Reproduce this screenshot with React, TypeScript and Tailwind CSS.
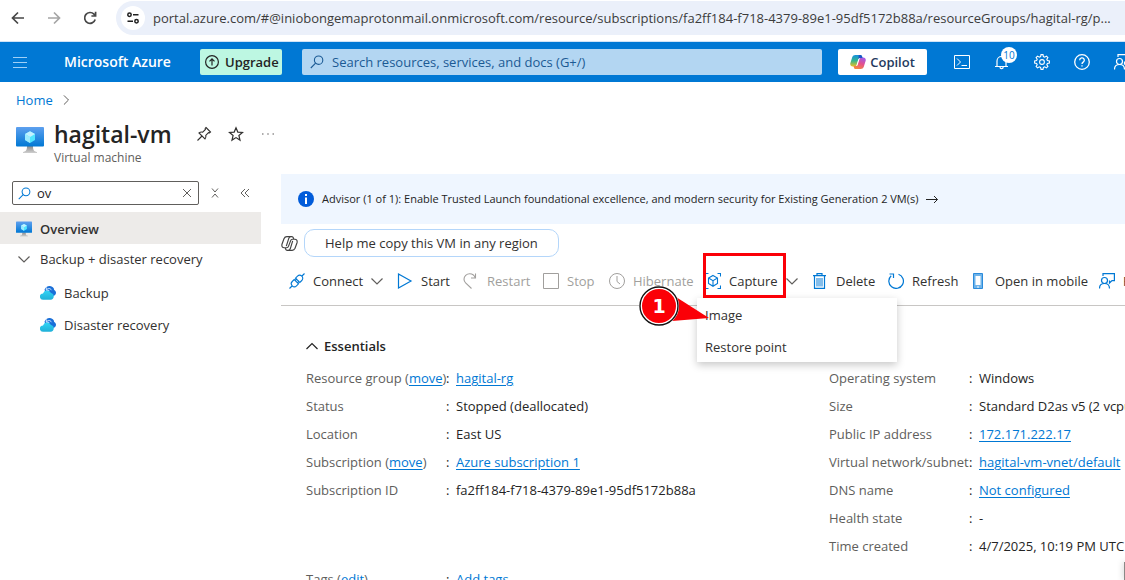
import type { ReactNode } from "react";

const ADDRESS =
  "portal.azure.com/#@iniobongemaprotonmail.onmicrosoft.com/resource/subscriptions/fa2ff184-f718-4379-89e1-95df5172b88a/resourceGroups/hagital-rg/p...";

type SvgProps = { size?: number; className?: string; children: ReactNode; box?: string; sw?: number };

function Line({ size = 16, className = "", children, box = "0 0 16 16", sw = 1 }: SvgProps) {
  return (
    <svg
      width={size}
      height={size}
      viewBox={box}
      fill="none"
      stroke="currentColor"
      strokeWidth={sw}
      className={"shrink-0 " + className}
      aria-hidden="true"
    >
      {children}
    </svg>
  );
}

function Chevron({ dir, className = "", size = 12 }: { dir: "up" | "down" | "right"; className?: string; size?: number }) {
  const d = { up: "M0.5 9 6 3.5 11.5 9", down: "M0.5 3.5 6 9 11.5 3.5", right: "M3.5 0.5 9 6 3.5 11.5" }[dir];
  return (
    <Line size={size} box="0 0 12 12" className={className} sw={1.2}>
      <path d={d} />
    </Line>
  );
}

function SearchIcon({ className = "", size = 14 }: { className?: string; size?: number }) {
  return (
    <Line size={size} box="0 0 14 14" className={className} sw={1.1}>
      <circle cx="8.6" cy="5.2" r="4.2" />
      <path d="M5.6 8.2 0.8 13" />
    </Line>
  );
}

function VmIcon({ size, id }: { size: number; id: string }) {
  return (
    <svg width={size} height={size} viewBox="0 0 28 28" className="shrink-0" aria-hidden="true">
      <defs>
        <linearGradient id={id + "a"} x1="0" y1="0" x2="0" y2="1">
          <stop offset="0" stopColor="#5ea0ef" />
          <stop offset="1" stopColor="#0078d4" />
        </linearGradient>
        <linearGradient id={id + "b"} x1="0" y1="0" x2="0" y2="1">
          <stop offset="0" stopColor="#8a8a8a" />
          <stop offset="1" stopColor="#cfcfcf" />
        </linearGradient>
      </defs>
      <path d="M11 20h6c0 4 .8 5.400 4 6v1H7v-1c3.200-.6 4-2 4-6z" fill={"url(#" + id + "b)"} />
      <rect x="0" y="1" width="28" height="19.500" rx="1" fill={"url(#" + id + "a)"} />
      <path d="M14 5.200 19 8v6l-5 2.900L9 14V8z" fill="#50e6ff" />
      <path d="M14 5.200 19 8l-5 3-5-3z" fill="#c3f1ff" />
      <path d="M14 11v5.900L9 14V8z" fill="#9cebff" />
    </svg>
  );
}

function CloudIcon({ id }: { id: string }) {
  return (
    <svg width="16" height="16" viewBox="0 0 16 16" className="shrink-0" aria-hidden="true">
      <defs>
        <linearGradient id={id} x1="0" y1="0" x2="0" y2="1">
          <stop offset="0" stopColor="#32d4f5" />
          <stop offset="1" stopColor="#1fb0d8" />
        </linearGradient>
      </defs>
      <path d="M4.500 4.800C5.300 2.400 7.600.9 10 1.100c2.300.2 3.900 1.700 4.200 3.800C15.400 5.400 16 6.500 16 7.700c0 1.900-1.400 3.200-3.300 3.200H7z" fill="#1a6fd8" />
      <path d="M6.300 2.300v3h3M6.500 5C7.600 3 10.200 2.800 11.500 5.200" stroke="#cfe5ff" strokeWidth="1" fill="none" />
      <path
        d="M3.200 14.800A3.200 3.200 0 0 1 3 8.400 4.300 4.300 0 0 1 11 7.900a3.500 3.500 0 0 1-.4 6.900z"
        fill={"url(#" + id + ")"}
      />
    </svg>
  );
}

function CopilotColor() {
  return (
    <svg width="16" height="16" viewBox="0 0 16 16" className="shrink-0" aria-hidden="true">
      <defs>
        <linearGradient id="cpA" x1="0" y1="0" x2="0" y2="1">
          <stop offset="0" stopColor="#1490df" />
          <stop offset="0.500" stopColor="#35b58c" />
          <stop offset="1" stopColor="#f0c020" />
        </linearGradient>
        <linearGradient id="cpB" x1="0.700" y1="0" x2="0.300" y2="1">
          <stop offset="0" stopColor="#a05be8" />
          <stop offset="0.500" stopColor="#e5508c" />
          <stop offset="1" stopColor="#f58a3c" />
        </linearGradient>
      </defs>
      <path d="M5.300 1h5c1 0 1.500.7 1.800 1.600L12.500 4H10c-1 0-1.500.7-1.800 1.600L6.500 11c-.3 1-.9 1.600-2 1.600H2.700C.8 12.600-.2 11 .4 9l1.900-6C2.800 1.700 3.800 1 5.300 1z" fill="url(#cpA)" />
      <path d="M10.700 15h-5c-1 0-1.500-.7-1.800-1.600L3.500 12H6c1 0 1.500-.7 1.800-1.600L9.500 5c.3-1 .9-1.600 2-1.600h1.800c1.900 0 2.900 1.600 2.300 3.600l-1.900 6c-.5 1.300-1.500 2-3 2z" fill="url(#cpB)" />
      <path d="M8.700 1h1.600c1 0 1.500.7 1.800 1.600l.4 1.400H10c-.8 0-1.300.4-1.600 1z" fill="#1b55c8" />
      <path d="M8.600 5.200 6.900 10.800H7.300L9.200 5z" fill="#fff" />
    </svg>
  );
}

function FeedbackIcon({ className = "", size = 16 }: { className?: string; size?: number }) {
  return (
    <Line className={className} size={size} sw={1.2}>
      <circle cx="5.500" cy="7.500" r="3" />
      <path d="M.5 15.500c0-3 2-5 5-5s5 2 5 5M4 3V.6h11.400v7H13L10.500 10V7.500" />
    </Line>
  );
}

function ToolButton({
  icon,
  label,
  disabled = false,
  menu = false,
}: {
  icon: ReactNode;
  label: string;
  disabled?: boolean;
  menu?: boolean;
}) {
  return (
    <button
      type="button"
      disabled={disabled}
      className="flex h-8 items-center gap-2 whitespace-nowrap text-[#323130] disabled:text-[#a19f9d]"
    >
      <span className={disabled ? "text-[#a19f9d]" : "text-[#0078d4]"}>{icon}</span>
      {label}
      {menu && <Chevron dir="down" className="text-[#605e5c]" />}
    </button>
  );
}

function Link({ children }: { children: ReactNode }) {
  return (
    <a href="#" className="text-[#0078d4] underline underline-offset-2">
      {children}
    </a>
  );
}

function Fact({ label, action, children }: { label: string; action?: string; children: ReactNode }) {
  return (
    <div className="flex h-7 items-center whitespace-nowrap">
      <dt className="w-[140px] shrink-0 text-[#605e5c]">
        {label}
        {action && (
          <>
            {" "}
            (<Link>{action}</Link>)
          </>
        )}
      </dt>
      <span className="w-[10px] shrink-0">:</span>
      <dd>{children}</dd>
    </div>
  );
}

function BrowserBar() {
  return (
    <div className="flex h-[41px] items-start bg-white pt-px text-[#474747]">
      <div className="flex h-[34px] w-[116px] shrink-0 items-center gap-5 pl-[10px]">
        <button type="button" aria-label="Back">
          <Line sw={1.7}>
            <path d="M14 8H3M8 2.500 2.500 8 8 13.500" />
          </Line>
        </button>
        <button type="button" aria-label="Forward" className="text-[#a5a5a5]">
          <Line sw={1.7}>
            <path d="M2 8h11M8 2.500 13.500 8 8 13.500" />
          </Line>
        </button>
        <button type="button" aria-label="Reload">
          <Line sw={1.7}>
            <path d="M13.200 9.500A5.400 5.400 0 1 1 12 4.200L13.500 5.700M13.600 1.800v4.200H9.400" />
          </Line>
        </button>
      </div>
      <div className="flex h-[34px] min-w-0 flex-1 items-center gap-2 rounded-l-full bg-[#ebf0fa] pl-[5px]">
        <button
          type="button"
          aria-label="Site information"
          className="flex size-6 shrink-0 items-center justify-center rounded-full bg-white text-[#1f1f1f]"
        >
          <Line size={14} box="0 0 14 14" sw={1.5}>
            <circle cx="3.500" cy="3.800" r="1.700" />
            <path d="M7 3.800h5.500M1.500 10.200H7" />
            <circle cx="10.500" cy="10.200" r="1.700" />
          </Line>
        </button>
        <input
          aria-label="Address"
          defaultValue={ADDRESS}
          className="min-w-0 flex-1 bg-transparent text-[13px] text-[#3c3c3c] outline-none"
        />
      </div>
    </div>
  );
}

function PortalHeader() {
  return (
    <header className="flex h-[41px] items-center overflow-hidden border-t border-[#cfe3f7] bg-[#0078d4] text-white">
      <button type="button" aria-label="Portal menu" className="ml-[13px] w-[51px] shrink-0 text-[#9fd0f7]">
        <Line size={14} box="0 0 14 14" sw={1.2}>
          <path d="M0 2.500h14M0 7.500h14M0 12.500h14" />
        </Line>
      </button>
      <a href="#" className="w-[136px] shrink-0 text-[14px] font-semibold whitespace-nowrap">
        Microsoft Azure
      </a>
      <button
        type="button"
        className="flex h-[26px] w-[82px] shrink-0 items-center gap-[6px] rounded-[2px] bg-[#bdf7e2] pl-[5px] text-[13px] font-semibold text-[#242424]"
      >
        <Line size={14} box="0 0 14 14" sw={1.2}>
          <circle cx="7" cy="7" r="6.400" />
          <path d="M7 10.500V4M4.500 6.300 7 3.800l2.500 2.500" />
        </Line>
        Upgrade
      </button>
      <label className="ml-5 flex h-[26px] min-w-0 flex-1 items-center gap-2 rounded-[2px] bg-[#b3d6f2] pl-2 text-[#1b5a94]">
        <SearchIcon />
        <input
          aria-label="Search resources, services, and docs"
          placeholder="Search resources, services, and docs (G+/)"
          className="min-w-0 flex-1 bg-transparent text-[13px] outline-none placeholder:text-[#1b5a94]"
        />
      </label>
      <button
        type="button"
        className="ml-4 flex h-[26px] w-[89px] shrink-0 items-center justify-center gap-1 rounded-[2px] bg-white text-[13px] font-semibold text-[#243a5e]"
      >
        <CopilotColor />
        Copilot
      </button>
      <div className="ml-[27px] flex w-[171px] shrink-0 items-center gap-6">
        <button type="button" aria-label="Cloud Shell">
          <Line>
            <path d="M.5 1.500h15v13H.5zM3 4.500 6.500 8 3 11.500M7.500 11.500H13" />
          </Line>
        </button>
        <button type="button" aria-label="Notifications" className="relative">
          <Line sw={1.2}>
            <path d="M3 12.500V7a4.500 4.500 0 0 1 9 0v5.500M1 12.500h13M6 13a1.600 1.600 0 0 0 3.200 0" />
          </Line>
          <span className="absolute -top-[7px] left-[7px] flex size-4 items-center justify-center rounded-full bg-white text-[10px] leading-none text-[#0078d4]">
            10
          </span>
        </button>
        <button type="button" aria-label="Settings">
          <Line sw={1.1}>
            <circle cx="8" cy="8" r="2.400" />
            <path d="M6.600 2.600 7 .6h2l.4 2 1.300.6 1.800-1.100 1.400 1.400-1.100 1.800.6 1.300 2 .4v2l-2 .4-.6 1.300 1.100 1.800-1.400 1.400-1.800-1.100-1.300.6-.4 2H7l-.4-2-1.300-.6-1.800 1.100-1.400-1.400 1.100-1.800-.6-1.300-2-.4V7l2-.4.6-1.300-1.100-1.800 1.400-1.400 1.800 1.100z" />
          </Line>
        </button>
        <button type="button" aria-label="Help">
          <Line sw={1.3}>
            <circle cx="8" cy="8" r="7.300" />
            <path d="M5.700 6.200a2.300 2.300 0 1 1 3.500 1.900C8.300 8.700 8 9 8 10M8 11.200v1.400" />
          </Line>
        </button>
        <button type="button" aria-label="Feedback">
          <FeedbackIcon />
        </button>
      </div>
    </header>
  );
}

function ResourceTitle() {
  return (
    <div>
      <nav aria-label="Breadcrumb" className="flex h-9 items-center gap-2 pl-4 text-[13px]">
        <a href="#" className="text-[#0078d4]">
          Home
        </a>
        <Chevron dir="right" size={10} className="text-[#605e5c]" />
      </nav>
      <div className="flex items-start pl-4">
        <div className="w-[38px] pt-2">
          <VmIcon size={28} id="vmL" />
        </div>
        <div className="w-[142px]">
          <h1 className="text-[23px] leading-8 font-semibold whitespace-nowrap text-[#242424]">hagital-vm</h1>
          <p className="text-[12px] leading-4 text-[#605e5c]">Virtual machine</p>
        </div>
        <div className="flex h-8 items-center gap-4 text-[#323130]">
          <button type="button" aria-label="Pin to dashboard">
            <Line sw={1.1}>
              <path d="M10 1.500 14.500 6l-1 .8-1-.2-2.700 2.700c.4 1.400.1 2.600-.8 3.700L3 7c1.100-.9 2.300-1.200 3.700-.8l2.700-2.700-.2-1zM6 10l-4.500 4.500" />
            </Line>
          </button>
          <button type="button" aria-label="Favorite">
            <Line sw={1.2}>
              <path d="m8 1.800 1.800 4.300 4.700.4-3.600 3 1.100 4.600L8 11.600l-4 2.500 1.100-4.600-3.600-3 4.700-.4z" />
            </Line>
          </button>
          <button type="button" aria-label="More">
            <Line sw={1.2}>
              <path d="M2.200 8h1.200M7.400 8h1.200M12.600 8h1.200" />
            </Line>
          </button>
        </div>
      </div>
    </div>
  );
}

function Sidebar() {
  return (
    <aside className="w-[261px] shrink-0 pt-[7px]">
      <div className="mb-[7px] flex items-center pl-3 text-[#605e5c]">
        <label className="flex h-6 w-[187px] items-center gap-[6px] rounded-[2px] border border-[#605e5c] px-[5px]">
          <SearchIcon size={13} className="text-[#0078d4]" />
          <input aria-label="Filter menu" defaultValue="ov" className="min-w-0 flex-1 text-[13px] text-[#242424] outline-none" />
          <button type="button" aria-label="Clear filter">
            <Line size={12} box="0 0 12 12">
              <path d="m2 2 8 8M10 2l-8 8" />
            </Line>
          </button>
        </label>
        <button type="button" aria-label="Collapse groups" className="ml-[10px]">
          <Line size={12} box="0 0 12 12">
            <path d="M3 1.500 6 5l3-3.500M3 10.500 6 7l3 3.500" />
          </Line>
        </button>
        <button type="button" aria-label="Hide menu" className="ml-[18px]">
          <Line size={12} box="0 0 12 12">
            <path d="M6 2 2 6l4 4M10 2 6 6l4 4" />
          </Line>
        </button>
      </div>
      <nav aria-label="Resource menu" className="text-[13px] text-[#323130]">
        <a href="#" className="flex h-8 items-center gap-2 bg-[#edebe9] pt-px pl-4 font-semibold">
          <VmIcon size={16} id="vmS" />
          Overview
        </a>
        <button type="button" className="flex h-8 items-center gap-[10px] pb-[2px] pl-[18px]">
          <Chevron dir="down" className="text-[#605e5c]" />
          Backup + disaster recovery
        </button>
        <a href="#" className="flex h-8 items-center gap-2 pt-px pl-10">
          <CloudIcon id="cl1" />
          Backup
        </a>
        <a href="#" className="flex h-8 items-center gap-2 pt-px pl-10">
          <CloudIcon id="cl2" />
          Disaster recovery
        </a>
      </nav>
    </aside>
  );
}

function CaptureMenu() {
  return (
    <div className="relative">
      <ToolButton
        label="Capture"
        menu
        icon={
          <Line sw={1.1}>
            <path d="M.5 3.500v-3h3M12.500.5h3v3M15.500 12.500v3h-3M3.500 15.500h-3v-3" />
            <path d="M8 2.500 12.500 5v5.500L8 13.300l-4.500-2.800V5zM3.500 5 8 7.700 12.500 5M8 7.700v5.600" />
          </Line>
        }
      />
      <div className="absolute top-[33px] -left-2 z-10 w-[200px] bg-white text-[#323130] shadow-[0_3px_8px_rgba(0,0,0,0.22)]">
        <button type="button" className="flex h-8 w-full items-center px-2 pt-px">
          Image
        </button>
        <button type="button" className="flex h-8 w-full items-center px-2 pt-px">
          Restore point
        </button>
      </div>
      <div className="pointer-events-none absolute -top-3 -left-[2px] z-20 h-[45px] w-[83px] border-3 border-[#fb0007]" />
      <svg
        width="72"
        height="42"
        viewBox="0 0 72 42"
        className="pointer-events-none absolute top-5 -left-[67px] z-20"
        role="img"
        aria-label="Step 1"
      >
        <path d="M38 12 71 33 34 36z" fill="#fb0007" />
        <circle cx="21" cy="21" r="18.500" fill="#fb0007" stroke="#fff" strokeWidth="3" />
        <circle cx="21" cy="21" r="19" fill="none" stroke="#111" strokeWidth="1.400" />
        <text x="21" y="28" textAnchor="middle" fill="#fff" className="font-['DejaVu_Sans'] text-[19px] font-bold">
          1
        </text>
      </svg>
    </div>
  );
}

function Toolbar() {
  return (
    <div className="grid h-[49px] grid-cols-[108px_66px_80px_66px_96px_107px_76px_83px_128px_1fr] items-center border-b border-[#c8c6c4] pl-2">
      <ToolButton
        label="Connect"
        menu
        icon={
          <Line sw={1.1}>
            <path d="M.5 15.500 3 13M13 3 15.500.5M3.200 12.800c-1.300-1.300-1.300-3 0-4.300l2-2 4.300 4.300-2 2c-1.300 1.300-3 1.300-4.300 0zM12.800 3.200c1.300 1.300 1.300 3 0 4.300l-2 2L6.500 5.200l2-2c1.300-1.300 3-1.300 4.300 0zM6.200 7.500 8 5.700M8.500 9.800l1.800-1.800" />
          </Line>
        }
      />
      <ToolButton
        label="Start"
        icon={
          <Line sw={1.2}>
            <path d="M1.500 1v14L14 8z" />
          </Line>
        }
      />
      <ToolButton
        label="Restart"
        disabled
        icon={
          <Line sw={1.1}>
            <path d="M12.500.5V5H8M12.300 4.800C11.200 2.200 9.200.8 6.800.8 3.500.8 1 3.200 1 6.200c0 1.600.6 2.700 1.600 3.700l5.900 5.600" />
          </Line>
        }
      />
      <ToolButton
        label="Stop"
        disabled
        icon={
          <Line>
            <path d="M.5.5h15v15H.5z" />
          </Line>
        }
      />
      <ToolButton
        label="Hibernate"
        disabled
        icon={
          <Line>
            <circle cx="8" cy="8" r="7.500" />
            <path d="M8 3v5.500l3 2.500" />
          </Line>
        }
      />
      <CaptureMenu />
      <ToolButton
        label="Delete"
        icon={
          <Line sw={1.2}>
            <path d="M4 5h7v8.500H4z" fill="#83bdea" stroke="none" />
            <path d="M1 2.600h13M5 2.500V.6h5v1.900M2.500 2.600v12.800h10V2.600" />
          </Line>
        }
      />
      <ToolButton
        label="Refresh"
        icon={
          <Line sw={1.2}>
            <path d="M10.500 1.200A7.300 7.300 0 1 1 3.200 2.700M1.500 1h4v4" />
          </Line>
        }
      />
      <ToolButton
        label="Open in mobile"
        icon={
          <Line>
            <path d="M2.500.5h9v15h-9z" fill="#6fb4ea" stroke="#2b8bdb" />
            <path d="M4.500 3h5v9h-5z" fill="#fff" stroke="none" />
            <path d="M6 14h2" stroke="#fff" />
          </Line>
        }
      />
      <ToolButton label="Feedback" icon={<FeedbackIcon />} />
    </div>
  );
}

function Essentials() {
  return (
    <section className="pt-[27px]">
      <button type="button" className="mb-[5px] ml-[25px] flex h-[26px] items-center gap-[6px] font-semibold text-[#242424]">
        <Chevron dir="up" />
        Essentials
      </button>
      <div className="grid grid-cols-[523px_1fr] pl-[25px] text-[#242424]">
        <dl>
          <Fact label="Resource group" action="move">
            <Link>hagital-rg</Link>
          </Fact>
          <Fact label="Status">Stopped (deallocated)</Fact>
          <Fact label="Location">East US</Fact>
          <Fact label="Subscription" action="move">
            <Link>Azure subscription 1</Link>
          </Fact>
          <Fact label="Subscription ID">fa2ff184-f718-4379-89e1-95df5172b88a</Fact>
        </dl>
        <dl>
          <Fact label="Operating system">Windows</Fact>
          <Fact label="Size">Standard D2as v5 (2 vcpus, 8 GiB memory)</Fact>
          <Fact label="Public IP address">
            <Link>172.171.222.17</Link>
          </Fact>
          <Fact label="Virtual network/subnet">
            <Link>hagital-vm-vnet/default</Link>
          </Fact>
          <Fact label="DNS name">
            <Link>Not configured</Link>
          </Fact>
          <Fact label="Health state">-</Fact>
          <Fact label="Time created">4/7/2025, 10:19 PM UTC</Fact>
        </dl>
        <dl className="pt-[5px]">
          <Fact label="Tags" action="edit">
            <Link>Add tags</Link>
          </Fact>
        </dl>
      </div>
    </section>
  );
}

export default function App() {
  return (
    <div className="relative flex h-screen flex-col overflow-hidden bg-white font-['Open_Sans','Noto_Sans',sans-serif] text-[13px] leading-[18px]">
      <BrowserBar />
      <PortalHeader />
      <ResourceTitle />
      <div className="flex min-h-0 flex-1 gap-5 pt-2">
        <Sidebar />
        <main className="min-w-0 flex-1">
          <a href="#" className="flex h-[50px] items-center gap-2 bg-[#eff6ff] pl-[17px] text-[11px] whitespace-nowrap text-[#242424]">
            <svg width="16" height="16" viewBox="0 0 16 16" className="shrink-0" aria-hidden="true">
              <circle cx="8" cy="8" r="8" fill="#015cda" />
              <path d="M7 6.500h2V13H7zM7 3h2v2H7z" fill="#fff" />
            </svg>
            Advisor (1 of 1): Enable Trusted Launch foundational excellence, and modern security for Existing Generation 2 VM(s)
            <Line size={12} box="0 0 12 12">
              <path d="M0 6.500h11.500M8 3 11.500 6.500 8 10" />
            </Line>
          </a>
          <div className="flex items-center gap-[6px] pt-[5px]">
            <Line size={17} className="text-[#424242]" sw={1.1}>
              <path d="M5.500 1.500h4.700c.8 0 1.200.5 1.500 1.300l.3 1.200M5.500 1.500c-1.500 0-2.200.8-2.700 2L1 8.500c-.6 2 .2 3.500 2 3.500h2.300c1 0 1.500-.6 1.800-1.500L9 5.500C9.300 4.500 9.800 4 10.700 4h2.300c1.800 0 2.600 1.500 2 3.500l-1.800 5c-.5 1.200-1.200 2-2.700 2H5.800c-.8 0-1.200-.5-1.500-1.300L4 12" />
              <path d="M9 1.500C8.200 1.500 7.700 2.200 7.400 3L5 10.500M7 14.500c.9 0 1.400-.7 1.700-1.500L11 5.500" />
            </Line>
            <button type="button" className="h-7 rounded-[10px] border border-[#b4d6fa] px-5 text-[#323130]">
              Help me copy this VM in any region
            </button>
          </div>
          <Toolbar />
          <Essentials />
        </main>
      </div>
      <div className="absolute -right-px bottom-0 h-[18px] w-[2px] bg-[#8a8886] shadow-[0_0_6px_rgba(0,0,0,0.35)]" />
    </div>
  );
}
